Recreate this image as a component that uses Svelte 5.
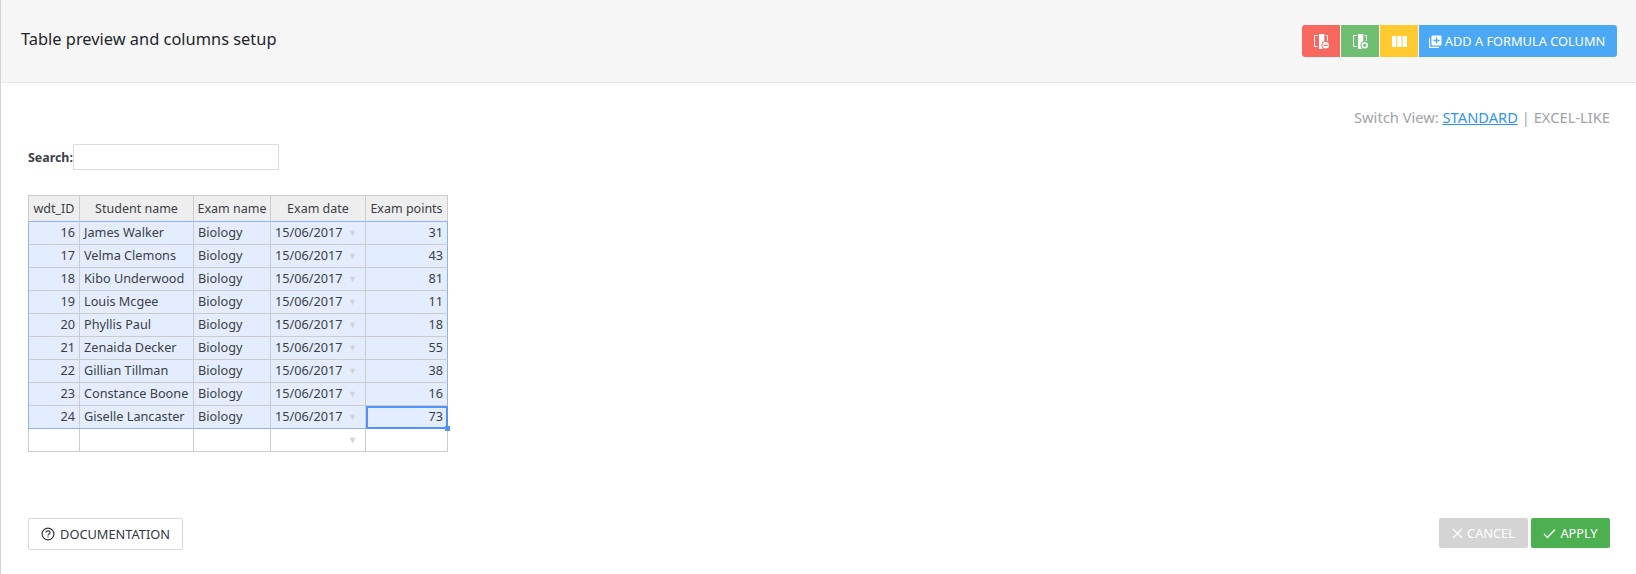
<script lang="ts">
  const rows = [
    [16, 'James Walker', 31],
    [17, 'Velma Clemons', 43],
    [18, 'Kibo Underwood', 81],
    [19, 'Louis Mcgee', 11],
    [20, 'Phyllis Paul', 18],
    [21, 'Zenaida Decker', 55],
    [22, 'Gillian Tillman', 38],
    [23, 'Constance Boone', 16],
    [24, 'Giselle Lancaster', 73],
  ];
</script>

<div class="page">
  <header class="top">
    <h2 class="title">Table preview and columns setup</h2>
    <div class="actions">
      <button class="btn-icon red" aria-label="Remove column">
        <svg width="18" height="18" viewBox="0 0 18 18" fill="none">
          <path d="M5.5 3.5H2.5V14.5H5.5M13.5 3.5H15.5V9" stroke="#fff" stroke-width="1"/>
          <rect x="7" y="2" width="5.3" height="15" fill="#fff"/>
          <circle cx="13.7" cy="13.3" r="4.3" fill="#f96860"/>
          <circle cx="13.7" cy="13.3" r="3.2" fill="#fff"/>
          <rect x="11.7" y="12.7" width="4" height="1.2" fill="#f96860"/>
        </svg>
      </button>
      <button class="btn-icon green" aria-label="Add column">
        <svg width="18" height="18" viewBox="0 0 18 18" fill="none">
          <path d="M5.5 3.5H2.5V14.5H5.5M13.5 3.5H15.5V9" stroke="#fff" stroke-width="1"/>
          <rect x="7" y="2" width="5.3" height="15" fill="#fff"/>
          <circle cx="13.7" cy="13.3" r="4.3" fill="#6fbe72"/>
          <circle cx="13.7" cy="13.3" r="3.2" fill="#fff"/>
          <circle cx="13.7" cy="13.3" r="1.6" fill="#6fbe72"/>
        </svg>
      </button>
      <button class="btn-icon yellow" aria-label="Columns">
        <svg width="15" height="11" viewBox="0 0 15 11" fill="#fff">
          <rect x="0" y="0" width="4.3" height="11"/>
          <rect x="5.3" y="0" width="4.3" height="11"/>
          <rect x="10.6" y="0" width="4.3" height="11"/>
        </svg>
      </button>
      <button class="btn-formula">
        <svg width="13" height="13" viewBox="0 0 13 13" fill="none">
          <path d="M0.6 3V12.4H10" stroke="#fff" stroke-width="1.1"/>
          <rect x="2.5" y="0.5" width="10" height="10" rx="1" fill="#fff"/>
          <path d="M7.5 2.5V8.5M4.5 5.5H10.5" stroke="#4aa8f4" stroke-width="1.4"/>
        </svg>
        ADD A FORMULA COLUMN
      </button>
    </div>
  </header>

  <main class="body">
    <div class="switch">
      Switch View: <a href="#standard">STANDARD</a> | EXCEL-LIKE
    </div>

    <div class="search">
      <span class="search-label">Search:</span>
      <input class="search-input" type="text" />
    </div>

    <table class="grid">
      <colgroup>
        <col style="width: 51px" />
        <col style="width: 114px" />
        <col style="width: 77px" />
        <col style="width: 95px" />
        <col style="width: 82px" />
      </colgroup>
      <thead>
        <tr>
          <th>wdt_ID</th>
          <th>Student name</th>
          <th>Exam name</th>
          <th>Exam date</th>
          <th>Exam points</th>
        </tr>
      </thead>
      <tbody>
        {#each rows as row, i}
          <tr class="sel">
            <td class="num left-edge">{row[0]}</td>
            <td>{row[1]}</td>
            <td>Biology</td>
            <td class="date">15/06/2017<span class="arrow">▼</span></td>
            <td class="num right-edge" class:current={i === rows.length - 1}>
              {row[2]}
              {#if i === rows.length - 1}<span class="handle"></span>{/if}
            </td>
          </tr>
        {/each}
        <tr class="blank">
          <td></td>
          <td></td>
          <td></td>
          <td class="date"><span class="arrow">▼</span></td>
          <td></td>
        </tr>
      </tbody>
    </table>
  </main>

  <footer class="bottom">
    <button class="btn-doc">
      <svg width="14" height="14" viewBox="0 0 14 14" fill="none" stroke="#33373f">
        <circle cx="7" cy="7" r="5.9" stroke-width="1.2"/>
        <path d="M5 5.6C5 4.4 5.9 3.8 7 3.8C8.1 3.8 9 4.5 9 5.5C9 6.9 7 6.9 7 8.4" stroke-width="1.2"/>
        <path d="M7 9.4V10.6" stroke-width="1.2"/>
      </svg>
      DOCUMENTATION
    </button>
    <div class="footer-right">
      <button class="btn-cancel">
        <svg width="11" height="11" viewBox="0 0 11 11" stroke="#fff" stroke-width="1.2"><path d="M1 1L10 10M10 1L1 10"/></svg>
        CANCEL
      </button>
      <button class="btn-apply">
        <svg width="13" height="11" viewBox="0 0 13 11" fill="none" stroke="#fff" stroke-width="1.3"><path d="M1 6L4.5 9.5L12 1.5"/></svg>
        APPLY
      </button>
    </div>
  </footer>
</div>

<style>
  :global(body) {
    margin: 0;
    background: #ffffff;
  }

  .page {
    height: 574px;
    overflow: hidden;
    box-sizing: border-box;
    border-left: 1px solid #d4d4d4;
    font-family: "Noto Sans", "Open Sans", sans-serif;
    color: #3c3f46;
    display: flex;
    flex-direction: column;
  }

  .top {
    height: 82px;
    background-color: #f6f6f6;
    border-bottom: 1px solid #e8e8e8;
    display: flex;
    justify-content: space-between;
    align-items: flex-start;
    padding: 0 19px 0 20px;
  }

  .title {
    margin: 27px 0 0;
    font-size: 16.4px;
    line-height: 24px;
    font-weight: 400;
    color: #22252b;
  }

  .actions {
    display: flex;
    margin-top: 25px;
    gap: 1px;
  }

  button {
    font-family: inherit;
    border: none;
    cursor: pointer;
  }

  .btn-icon {
    width: 38px;
    height: 32px;
    padding: 0;
    display: flex;
    align-items: center;
    justify-content: center;
  }

  .red {
    background-color: #f96860;
    border-radius: 3px 0 0 3px;
  }

  .green {
    background-color: #6fbe72;
  }

  .yellow {
    background-color: #ffca30;
  }

  .btn-formula {
    width: 198px;
    height: 32px;
    padding: 0 2px 0 0;
    background-color: #4aa8f4;
    border-radius: 0 3px 3px 0;
    color: #ffffff;
    font-size: 12.8px;
    display: flex;
    align-items: center;
    justify-content: center;
    gap: 3px;
  }

  .body {
    flex: 1;
    padding: 0 26px 0 27px;
  }

  .switch {
    margin-top: 24px;
    text-align: right;
    font-size: 14.7px;
    line-height: 20px;
    color: #a0a3a8;
  }

  .switch a {
    color: #2f94ef;
  }

  .search {
    display: flex;
    align-items: center;
    margin-top: 17px;
  }

  .search-label {
    font-size: 12.4px;
    font-weight: 700;
    color: #3c3f46;
    width: 45px;
  }

  .search-input {
    width: 206px;
    height: 26px;
    box-sizing: border-box;
    border: 1px solid #dcdcdc;
    padding: 0 6px;
    outline: none;
  }

  .grid {
    margin-top: 25px;
    width: 420px;
    table-layout: fixed;
    border-collapse: separate;
    border-spacing: 0;
    border-top: 1px solid #cccccc;
    border-left: 1px solid #cccccc;
    font-size: 12.7px;
  }

  th,
  td {
    box-sizing: border-box;
    border-right: 1px solid #cccccc;
    border-bottom: 1px solid #cccccc;
    padding: 0 4px 2px;
    white-space: nowrap;
    overflow: hidden;
    height: 23px;
    font-weight: 400;
    color: #3c3f46;
  }

  th {
    height: 26px;
    background-color: #eeeeee;
    text-align: center;
    padding: 0 2px;
    font-size: 12.5px;
    border-bottom-color: #8db2f5;
  }

  .sel td {
    background-color: #e3edfd;
  }

  tbody tr:nth-child(9) td {
    border-bottom: 1px solid #8db2f5;
  }

  .num {
    text-align: right;
  }

  .left-edge {
    box-shadow: -1px 0 0 #8db2f5;
  }

  .right-edge {
    border-right-color: #8db2f5;
  }

  .date {
    position: relative;
  }

  .arrow {
    position: absolute;
    right: 8px;
    top: 6px;
    font-size: 9px;
    line-height: 9px;
    color: #d0d3d6;
  }

  .current {
    position: relative;
    overflow: visible;
    outline: 2px solid #5292f7;
    outline-offset: -2px;
  }

  .handle {
    position: absolute;
    right: -3px;
    bottom: -3px;
    width: 5px;
    height: 5px;
    background-color: #5292f7;
  }

  .bottom {
    height: 56px;
    display: flex;
    justify-content: space-between;
    align-items: flex-start;
    padding: 0 26px 0 27px;
  }

  .btn-doc {
    width: 155px;
    height: 32px;
    background-color: #ffffff;
    border: 1px solid #d8d8d8;
    border-radius: 2px;
    color: #33373f;
    font-size: 12.8px;
    display: flex;
    align-items: center;
    justify-content: center;
    gap: 5px;
    padding: 0;
  }

  .footer-right {
    display: flex;
    gap: 3px;
  }

  .btn-cancel,
  .btn-apply {
    height: 30px;
    border-radius: 2px;
    color: #ffffff;
    font-size: 12.8px;
    display: flex;
    align-items: center;
    justify-content: center;
    gap: 4px;
    padding: 0;
  }

  .btn-cancel {
    width: 89px;
    background-color: #d4d4d4;
  }

  .btn-apply {
    width: 79px;
    background-color: #4caf50;
  }
</style>
